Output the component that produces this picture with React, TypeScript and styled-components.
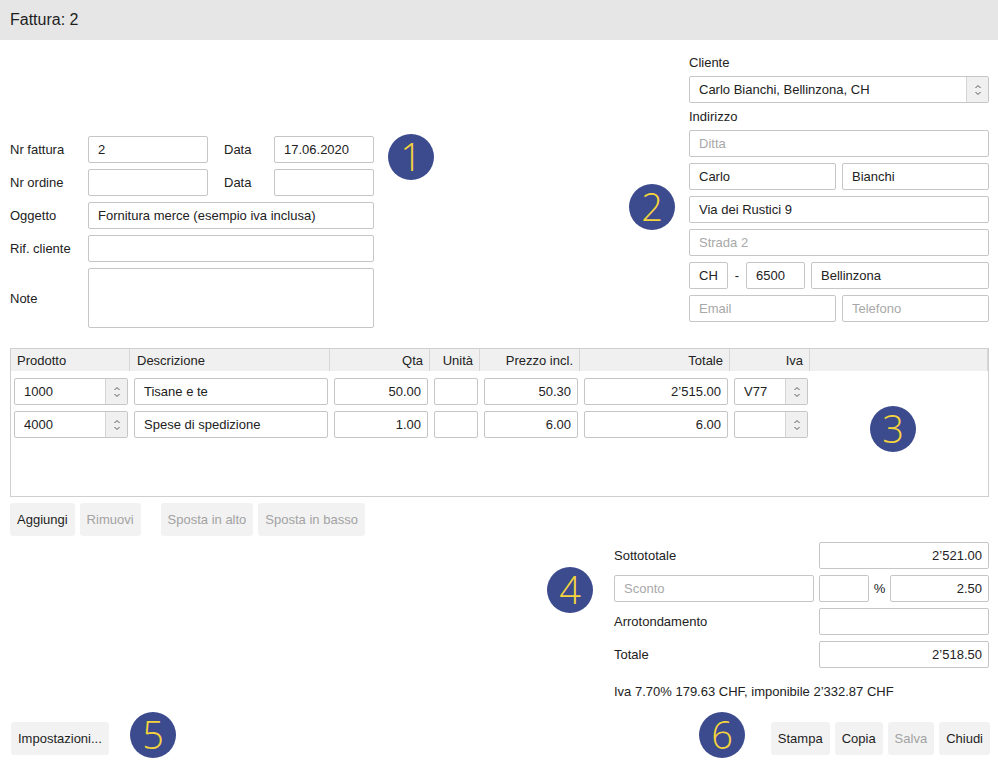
import styled, { createGlobalStyle } from "styled-components";

const GlobalStyle = createGlobalStyle`
  html, body {
    margin: 0;
    padding: 0;
    background: #ffffff;
  }
  body {
    font-family: "Liberation Sans", Arial, sans-serif;
    font-size: 13px;
    color: #222222;
  }
  * {
    box-sizing: border-box;
  }
`;

const Page = styled.div`
  position: relative;
  height: 100vh;
  display: flex;
  flex-direction: column;
`;

const TitleBar = styled.div`
  height: 40px;
  background: #e6e6e6;
  display: flex;
  align-items: center;
  padding-left: 10px;
  font-size: 16px;
  color: #1e1e1e;
`;

const Body = styled.div`
  flex: 1;
  display: flex;
  flex-direction: column;
  padding: 0 9px 9px 10px;
`;

const TopSection = styled.div`
  display: flex;
  justify-content: space-between;
  align-items: flex-start;
`;

const InvoiceForm = styled.div`
  margin-top: 96px;
  display: grid;
  grid-template-columns: 78px 120px 66px 100px;
  row-gap: 6px;
  align-items: center;
`;

const Label = styled.label<{ $indent?: boolean }>`
  padding-left: ${(p) => (p.$indent ? "16px" : "0")};
  white-space: nowrap;
`;

const Field = styled.input<{ $right?: boolean; $span?: number; $w?: number }>`
  height: 27px;
  width: ${(p) => (p.$w ? `${p.$w}px` : "100%")};
  min-width: 0;
  border: 1px solid #c6c6c6;
  border-radius: 2px;
  padding: 0 ${(p) => (p.$right ? "6px" : "4px")} 0 ${(p) => (p.$right ? "4px" : "9px")};
  font-family: inherit;
  font-size: 13px;
  color: #222222;
  background: #ffffff;
  text-align: ${(p) => (p.$right ? "right" : "left")};
  grid-column: ${(p) => (p.$span ? `span ${p.$span}` : "auto")};
  outline: none;
  &::placeholder {
    color: #a8a8a8;
  }
`;

const NoteArea = styled.textarea`
  grid-column: span 3;
  height: 60px;
  border: 1px solid #c6c6c6;
  border-radius: 2px;
  resize: none;
  font-family: inherit;
  font-size: 13px;
  outline: none;
`;

const ClientForm = styled.div`
  width: 300px;
  padding-top: 13px;
  display: flex;
  flex-direction: column;
  gap: 6px;
`;

const GroupLabel = styled.div<{ $top?: number }>`
  height: 20px;
  line-height: 20px;
  margin-top: ${(p) => p.$top ?? 0}px;
  margin-bottom: -3px;
`;

const FieldRow = styled.div<{ $cols: string }>`
  display: grid;
  grid-template-columns: ${(p) => p.$cols};
  column-gap: 6px;
  align-items: center;
`;

const Dash = styled.span`
  text-align: center;
`;

const Combo = styled.div<{ $w?: string }>`
  height: 27px;
  width: ${(p) => p.$w ?? "100%"};
  display: flex;
  border: 1px solid #c6c6c6;
  border-radius: 2px;
  background: #ffffff;
  overflow: hidden;
`;

const ComboText = styled.div`
  flex: 1;
  display: flex;
  align-items: center;
  padding-left: 9px;
  white-space: nowrap;
`;

const Stepper = styled.div`
  width: 22px;
  display: flex;
  align-items: center;
  justify-content: center;
  background: #f0f0f0;
  border-left: 1px solid #d4d4d4;
`;

const Table = styled.div`
  margin-top: 20px;
  height: 149px;
  border: 1px solid #cfcfcf;
  display: flex;
  flex-direction: column;
`;

const columns = "119px 200px 100px 50px 100px 150px 80px 1fr";

const HeadRow = styled.div`
  display: grid;
  grid-template-columns: ${columns};
  height: 22px;
  background: #f0f0f0;
`;

const HeadCell = styled.div<{ $right?: boolean }>`
  display: flex;
  align-items: center;
  justify-content: ${(p) => (p.$right ? "flex-end" : "flex-start")};
  padding: 0 6px 0 7px;
  border-right: 1px solid #d8d8d8;
  white-space: nowrap;
  &:first-child {
    padding-left: 6px;
  }
`;

const TableBody = styled.div`
  padding-top: 7px;
  display: flex;
  flex-direction: column;
  gap: 6px;
`;

const BodyRow = styled.div`
  display: grid;
  grid-template-columns: ${columns};
`;

const Cell = styled.div`
  padding: 0 2px 0 4px;
  &:first-child {
    padding-left: 3px;
  }
`;

const ButtonRow = styled.div`
  margin-top: 6px;
  display: flex;
  gap: 5px;
`;

const Button = styled.button<{ $disabled?: boolean; $gapBefore?: boolean }>`
  height: 33px;
  padding: 0 7px;
  border: none;
  border-radius: 3px;
  background: #f2f2f2;
  font-family: inherit;
  font-size: 13px;
  color: ${(p) => (p.$disabled ? "#a2a2a2" : "#1e1e1e")};
  margin-left: ${(p) => (p.$gapBefore ? "15px" : "0")};
  cursor: default;
`;

const TotalsWrap = styled.div`
  margin-top: 6px;
  display: flex;
  justify-content: flex-end;
`;

const Totals = styled.div`
  width: 375px;
  display: grid;
  grid-template-columns: 205px 50px 21px 99px;
  row-gap: 6px;
  align-items: center;
`;

const Percent = styled.span`
  text-align: center;
`;

const VatNote = styled.div`
  grid-column: 1 / -1;
  margin-top: 8px;
  line-height: 20px;
`;

const Footer = styled.div`
  margin-top: auto;
  display: flex;
  align-items: center;
  padding-left: 1px;
  margin-right: -1px;
`;

const FooterRight = styled.div`
  margin-left: auto;
  display: flex;
  gap: 5px;
`;

const Marker = styled.div<{ $x: number; $y: number }>`
  position: absolute;
  left: ${(p) => p.$x - 23}px;
  top: ${(p) => p.$y - 23}px;
  width: 46px;
  height: 46px;
  border-radius: 50%;
  background: #3c4a8e;
  color: #f6d53c;
  display: flex;
  align-items: center;
  justify-content: center;
  font-family: "Open Sans", "Noto Sans", sans-serif;
  font-weight: 300;
  font-size: 38px;
  line-height: 1;
  padding-bottom: 2px;
`;

function StepIcon() {
  return (
    <svg width="8" height="14" viewBox="0 0 8 14" fill="none">
      <path d="M1.5 5 L4 2.5 L6.5 5" stroke="#555" strokeWidth="1" />
      <path d="M1.5 9 L4 11.5 L6.5 9" stroke="#555" strokeWidth="1" />
    </svg>
  );
}

function ComboBox({ value, w }: { value: string; w?: string }) {
  return (
    <Combo $w={w}>
      <ComboText>{value}</ComboText>
      <Stepper>
        <StepIcon />
      </Stepper>
    </Combo>
  );
}

const rows = [
  { code: "1000", desc: "Tisane e te", qty: "50.00", price: "50.30", total: "2’515.00", vat: "V77" },
  { code: "4000", desc: "Spese di spedizione", qty: "1.00", price: "6.00", total: "6.00", vat: "" },
];

const markers = [
  { n: 1, x: 411, y: 157 },
  { n: 2, x: 652, y: 207 },
  { n: 3, x: 893, y: 429 },
  { n: 4, x: 570, y: 590 },
  { n: 5, x: 153, y: 735 },
  { n: 6, x: 722, y: 735 },
];

export default function App() {
  return (
    <Page>
      <GlobalStyle />
      <TitleBar>Fattura: 2</TitleBar>
      <Body>
        <TopSection>
          <InvoiceForm>
            <Label>Nr fattura</Label>
            <Field value="2" readOnly />
            <Label $indent>Data</Label>
            <Field value="17.06.2020" readOnly />

            <Label>Nr ordine</Label>
            <Field value="" readOnly />
            <Label $indent>Data</Label>
            <Field value="" readOnly />

            <Label>Oggetto</Label>
            <Field $span={3} value="Fornitura merce (esempio iva inclusa)" readOnly />

            <Label>Rif. cliente</Label>
            <Field $span={3} value="" readOnly />

            <Label>Note</Label>
            <NoteArea readOnly />
          </InvoiceForm>

          <ClientForm>
            <GroupLabel>Cliente</GroupLabel>
            <ComboBox value="Carlo Bianchi, Bellinzona, CH" />
            <GroupLabel $top={-2}>Indirizzo</GroupLabel>
            <Field placeholder="Ditta" readOnly />
            <FieldRow $cols="1fr 1fr">
              <Field value="Carlo" readOnly />
              <Field value="Bianchi" readOnly />
            </FieldRow>
            <Field value="Via dei Rustici 9" readOnly />
            <Field placeholder="Strada 2" readOnly />
            <FieldRow $cols="39px 6px 59px 1fr">
              <Field value="CH" readOnly />
              <Dash>-</Dash>
              <Field value="6500" readOnly />
              <Field value="Bellinzona" readOnly />
            </FieldRow>
            <FieldRow $cols="1fr 1fr">
              <Field placeholder="Email" readOnly />
              <Field placeholder="Telefono" readOnly />
            </FieldRow>
          </ClientForm>
        </TopSection>

        <Table>
          <HeadRow>
            <HeadCell>Prodotto</HeadCell>
            <HeadCell>Descrizione</HeadCell>
            <HeadCell $right>Qta</HeadCell>
            <HeadCell $right>Unità</HeadCell>
            <HeadCell $right>Prezzo incl.</HeadCell>
            <HeadCell $right>Totale</HeadCell>
            <HeadCell $right>Iva</HeadCell>
            <HeadCell />
          </HeadRow>
          <TableBody>
            {rows.map((r) => (
              <BodyRow key={r.code}>
                <Cell>
                  <ComboBox value={r.code} />
                </Cell>
                <Cell>
                  <Field value={r.desc} readOnly />
                </Cell>
                <Cell>
                  <Field $right value={r.qty} readOnly />
                </Cell>
                <Cell>
                  <Field value="" readOnly />
                </Cell>
                <Cell>
                  <Field $right value={r.price} readOnly />
                </Cell>
                <Cell>
                  <Field $right value={r.total} readOnly />
                </Cell>
                <Cell>
                  <ComboBox value={r.vat} />
                </Cell>
              </BodyRow>
            ))}
          </TableBody>
        </Table>

        <ButtonRow>
          <Button>Aggiungi</Button>
          <Button $disabled>Rimuovi</Button>
          <Button $disabled $gapBefore>
            Sposta in alto
          </Button>
          <Button $disabled>Sposta in basso</Button>
        </ButtonRow>

        <TotalsWrap>
          <Totals>
            <Label>Sottototale</Label>
            <Field $right $span={3} value="2’521.00" readOnly />

            <Field placeholder="Sconto" $w={200} readOnly />
            <Field value="" readOnly />
            <Percent>%</Percent>
            <Field $right value="2.50" readOnly />

            <Label>Arrotondamento</Label>
            <Field $span={3} value="" readOnly />

            <Label>Totale</Label>
            <Field $right $span={3} value="2’518.50" readOnly />

            <VatNote>Iva 7.70% 179.63 CHF, imponibile 2’332.87 CHF</VatNote>
          </Totals>
        </TotalsWrap>

        <Footer>
          <Button>Impostazioni...</Button>
          <FooterRight>
            <Button>Stampa</Button>
            <Button>Copia</Button>
            <Button $disabled>Salva</Button>
            <Button>Chiudi</Button>
          </FooterRight>
        </Footer>
      </Body>

      {markers.map((m) => (
        <Marker key={m.n} $x={m.x} $y={m.y}>
          {m.n}
        </Marker>
      ))}
    </Page>
  );
}
